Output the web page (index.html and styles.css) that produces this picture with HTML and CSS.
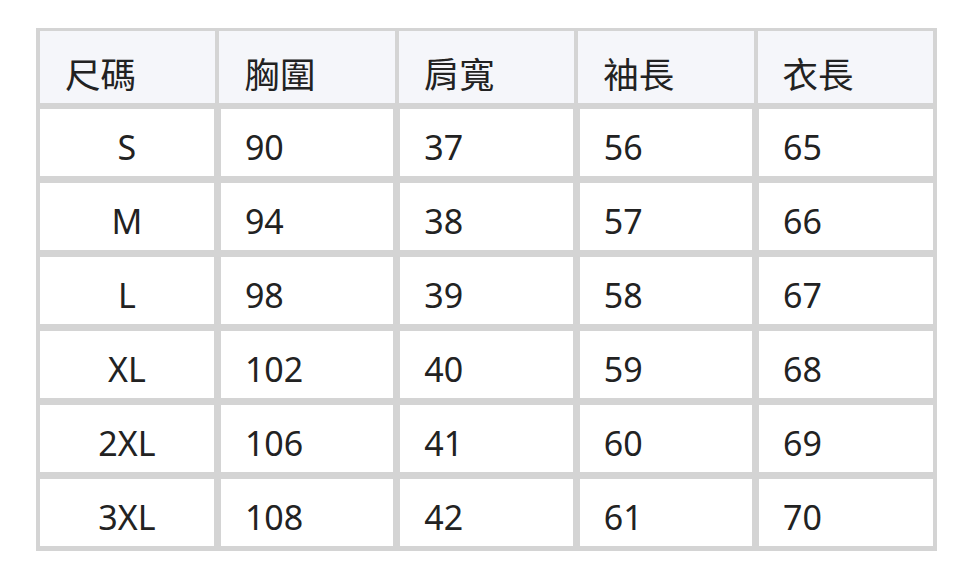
FILE: index.html
```html
<!DOCTYPE html>
<html lang="zh-Hant">
<head>
<meta charset="utf-8">
<link rel="stylesheet" href="styles.css">
</head>
<body>
<div class="size-table">
  <div class="cell head first">尺碼</div>
  <div class="cell head">胸圍</div>
  <div class="cell head">肩寬</div>
  <div class="cell head">袖長</div>
  <div class="cell head last">衣長</div>

  <div class="cell body first">S</div><div class="cell body">90</div><div class="cell body">37</div><div class="cell body">56</div><div class="cell body last">65</div>
  <div class="cell body first">M</div><div class="cell body">94</div><div class="cell body">38</div><div class="cell body">57</div><div class="cell body last">66</div>
  <div class="cell body first">L</div><div class="cell body">98</div><div class="cell body">39</div><div class="cell body">58</div><div class="cell body last">67</div>
  <div class="cell body first">XL</div><div class="cell body">102</div><div class="cell body">40</div><div class="cell body">59</div><div class="cell body last">68</div>
  <div class="cell body first">2XL</div><div class="cell body">106</div><div class="cell body">41</div><div class="cell body">60</div><div class="cell body last">69</div>
  <div class="cell body first">3XL</div><div class="cell body">108</div><div class="cell body">42</div><div class="cell body">61</div><div class="cell body last">70</div>
</div>
</body>
</html>
```
FILE: styles.css
```css
html, body {
  margin: 0;
  padding: 0;
  background: #ffffff;
}
body {
  padding: 28px 0 0 36px;
  font-family: "Noto Sans", "Noto Sans CJK TC", sans-serif;
  color: #222222;
}
.size-table {
  width: 901px;
  box-sizing: border-box;
  background: #d4d4d4;
  padding: 3px 4px 5px 4px;
  display: grid;
  grid-template-columns: repeat(5, 1fr);
  grid-template-rows: 71px repeat(6, 67px);
  column-gap: 4px;
  row-gap: 7px;
}
.cell {
  display: flex;
  align-items: center;
  padding: 9px 0 0 24px;
  box-sizing: border-box;
  font-size: 34px;
  line-height: 1;
}
.head {
  background: #f5f6fa;
  font-size: 35.5px;
  padding-top: 16px;
  padding-left: 25px;
  margin-bottom: -1px;
}
.body {
  background: #ffffff;
  margin: 0 1.5px;
}
.body.first {
  margin-left: 0;
  justify-content: center;
  padding-left: 0;
}
.body.last {
  margin-right: 0;
}
```
